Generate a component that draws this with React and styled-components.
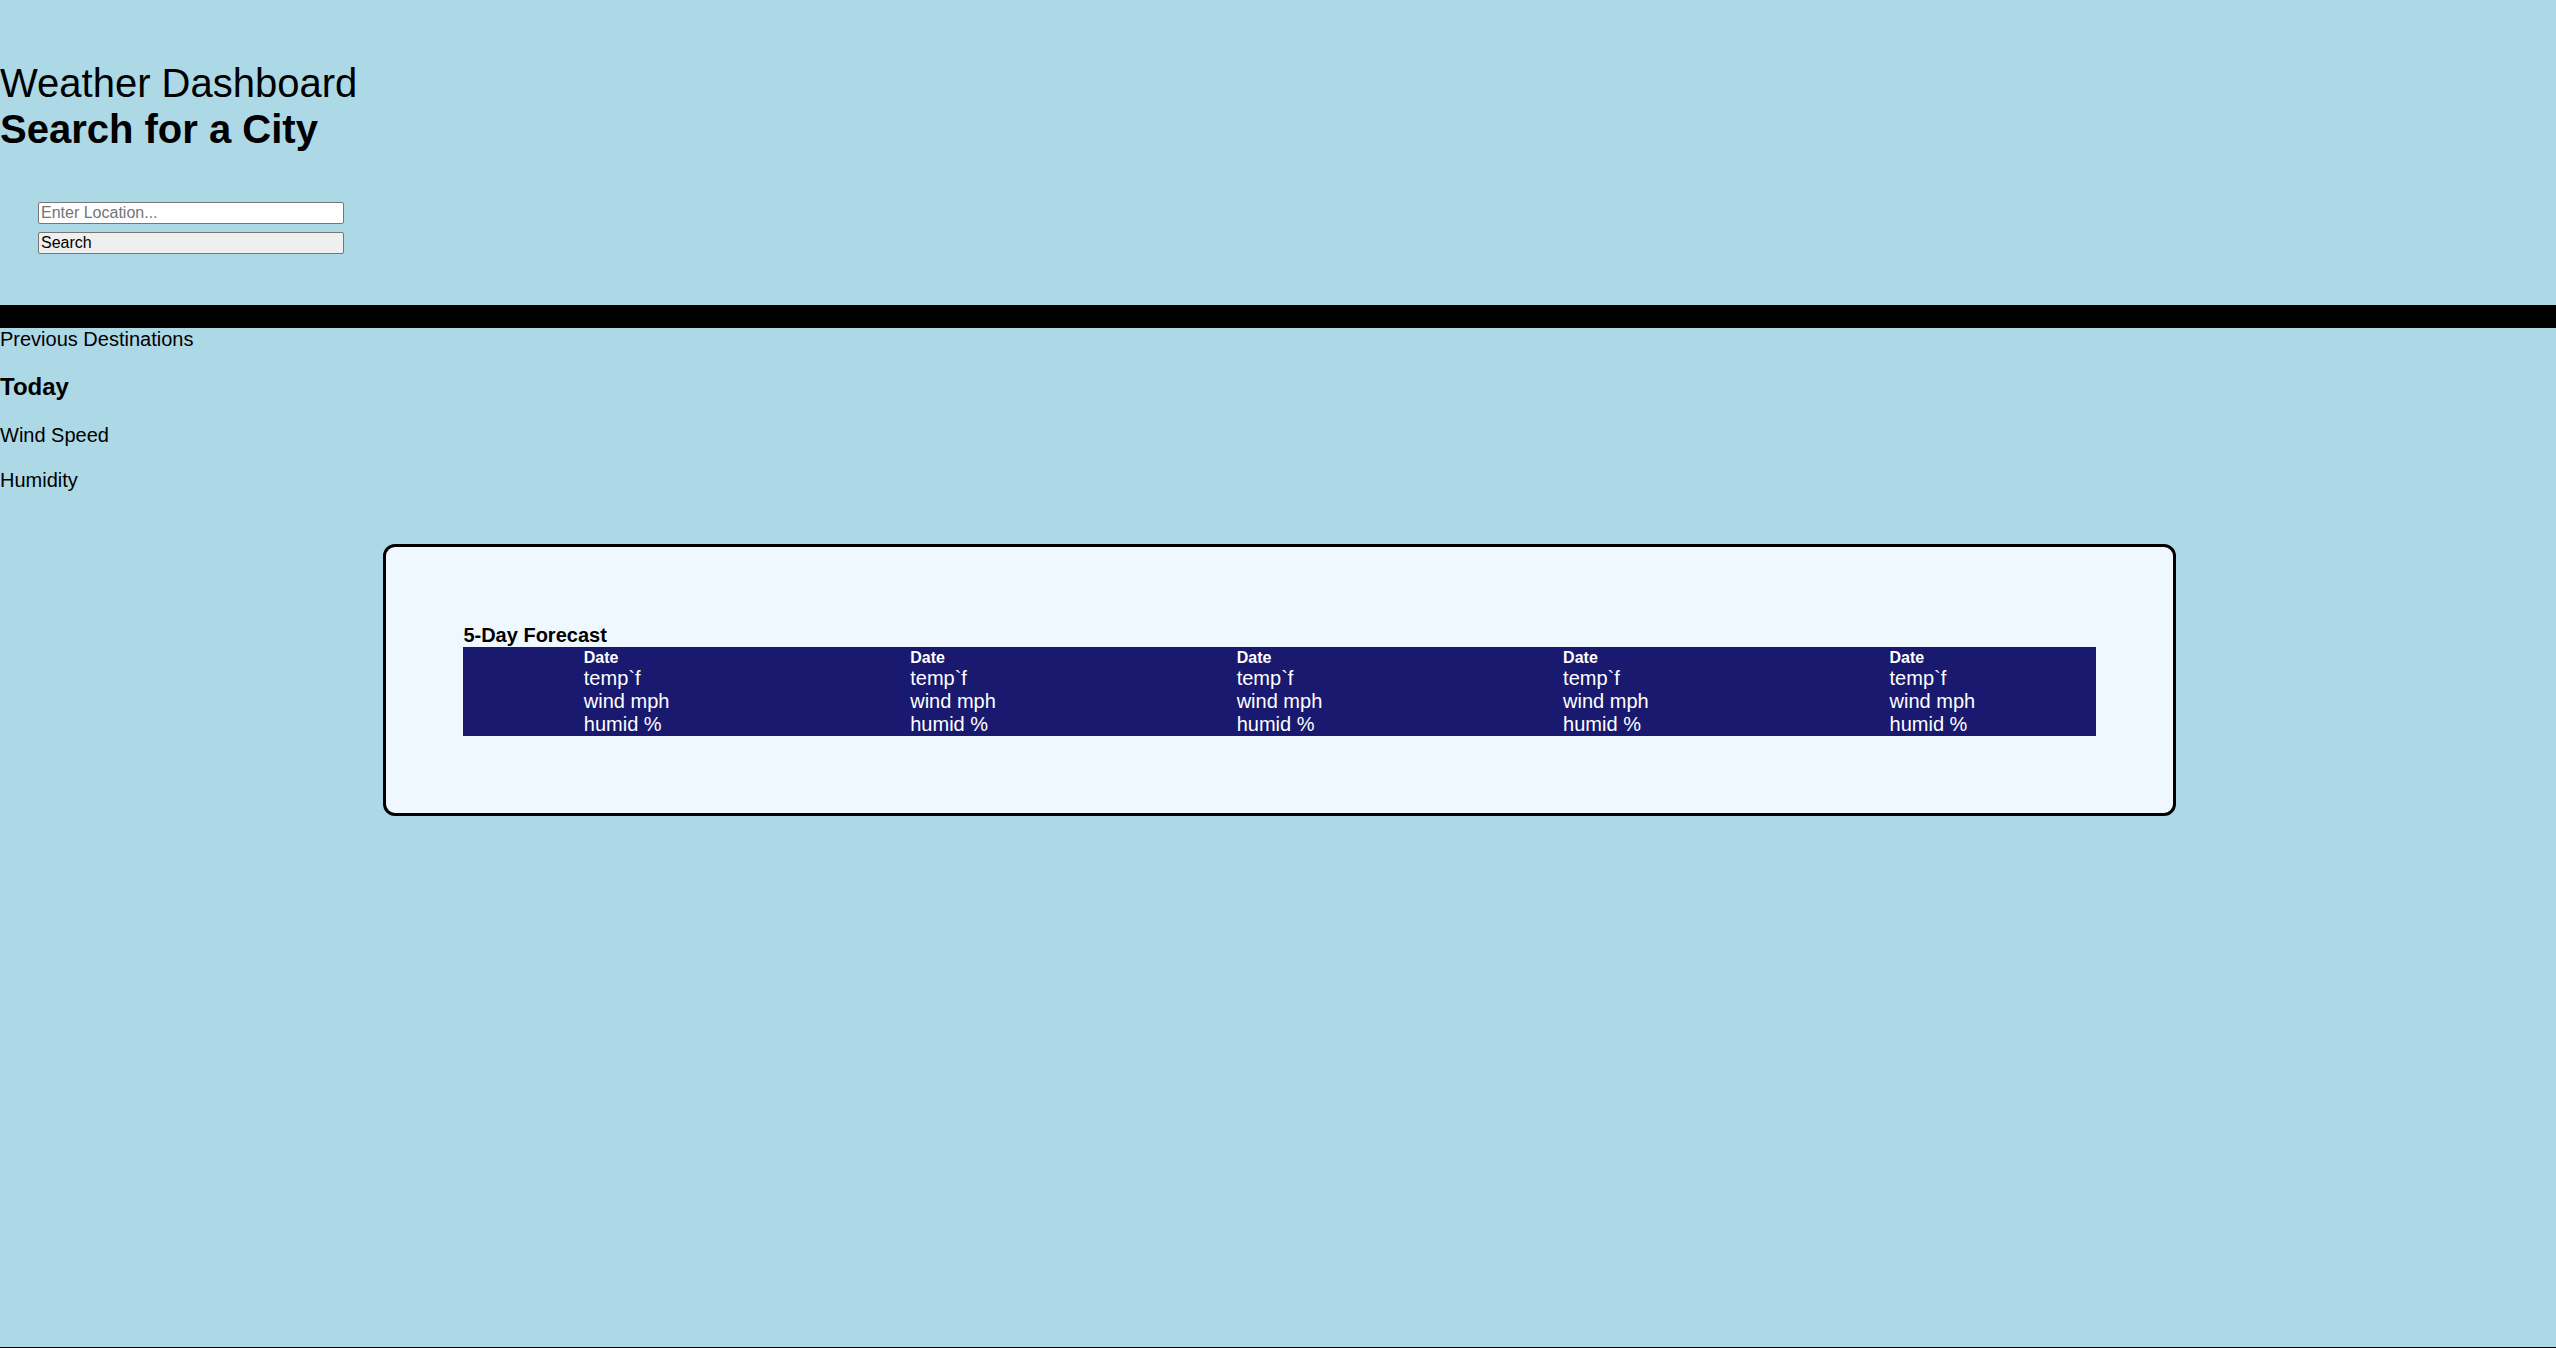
import React from "react";
import styled, { createGlobalStyle } from "styled-components";

const GlobalStyle = createGlobalStyle`
  html, body {
    margin: 0;
    padding: 0;
    background: #add8e6;
    font-family: "Liberation Sans", Arial, sans-serif;
    color: #000;
  }
`;

const Page = styled.div`
  min-height: 100vh;
  display: flex;
  flex-direction: column;
  box-sizing: border-box;
`;

const Header = styled.header`
  padding-top: 60px;
`;

const Title = styled.h1`
  margin: 0;
  font-size: 40px;
  font-weight: normal;
  line-height: 46px;
`;

const Subtitle = styled.h2`
  margin: 0;
  font-size: 40px;
  font-weight: bold;
  line-height: 46px;
`;

const SearchForm = styled.form`
  display: flex;
  flex-direction: column;
  gap: 8px;
  width: 306px;
  margin: 50px 0 51px 38px;
`;

const Field = styled.input`
  box-sizing: border-box;
  width: 306px;
  height: 22px;
  padding: 1px 2px;
  border: 1px solid #767676;
  border-radius: 2px;
  background: #fff;
  font-family: "Liberation Sans", Arial, sans-serif;
  font-size: 16px;
  &::placeholder {
    color: #757575;
  }
`;

const SearchButton = styled.button`
  box-sizing: border-box;
  width: 306px;
  height: 22px;
  padding: 1px 2px;
  border: 1px solid #767676;
  border-radius: 2px;
  background: #efefef;
  font-family: "Liberation Sans", Arial, sans-serif;
  font-size: 16px;
  text-align: left;
  color: #000;
`;

const Bar = styled.div`
  height: 23px;
  background: #000;
`;

const Sidebar = styled.section`
  display: flex;
  flex-direction: column;
  gap: 22px;
`;

const Label = styled.div`
  font-size: 20px;
  line-height: 23px;
`;

const TodayHeading = styled.h3`
  margin: 0 0 1px;
  font-size: 24px;
  line-height: 28px;
  font-weight: bold;
`;

const Card = styled.section`
  box-sizing: border-box;
  width: calc(70% + 3px);
  margin: 52px 0 0 15%;
  padding: 77px;
  border: 3px solid #000;
  border-radius: 12px;
  background: #f0f8ff;
`;

const CardTitle = styled.h4`
  margin: 0;
  font-size: 20px;
  line-height: 23px;
  font-weight: bold;
`;

const ForecastRow = styled.div`
  display: grid;
  grid-template-columns: repeat(5, 1fr);
  background: #191970;
  color: #fff;
`;

const Day = styled.div`
  display: flex;
  justify-content: center;
`;

const DayBody = styled.ul`
  list-style: none;
  margin: 0;
  padding: 0;
`;

const DayDate = styled.li`
  font-size: 16px;
  line-height: 19px;
  padding-top: 1px;
  font-weight: bold;
`;

const DayValue = styled.li`
  font-size: 20px;
  line-height: 23px;
`;

const Footer = styled.footer`
  margin-top: auto;
  border-bottom: 1px solid #000;
`;

const days = [1, 2, 3, 4, 5];

export default function App() {
  return (
    <Page>
      <GlobalStyle />
      <Header>
        <Title>Weather Dashboard</Title>
        <Subtitle>Search for a City</Subtitle>
        <SearchForm onSubmit={(e) => e.preventDefault()}>
          <Field type="text" placeholder="Enter Location..." />
          <SearchButton type="submit">Search</SearchButton>
        </SearchForm>
      </Header>
      <Bar />
      <Sidebar>
        <Label>Previous Destinations</Label>
        <TodayHeading>Today</TodayHeading>
        <Label>Wind Speed</Label>
        <Label>Humidity</Label>
      </Sidebar>
      <Card>
        <CardTitle>5-Day Forecast</CardTitle>
        <ForecastRow>
          {days.map((d) => (
            <Day key={d}>
              <DayBody>
                <DayDate>Date</DayDate>
                <DayValue>temp`f</DayValue>
                <DayValue>wind mph</DayValue>
                <DayValue>humid %</DayValue>
              </DayBody>
            </Day>
          ))}
        </ForecastRow>
      </Card>
      <Footer />
    </Page>
  );
}
